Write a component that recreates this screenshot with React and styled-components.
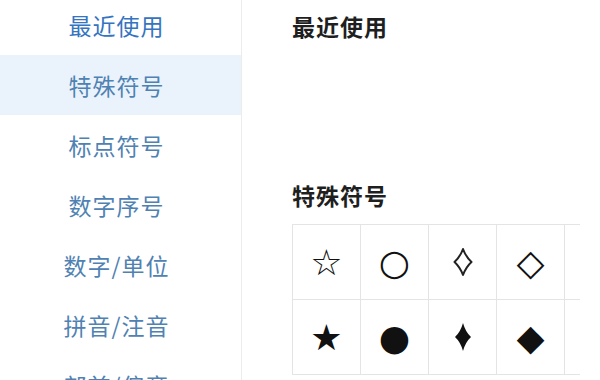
import styled, { createGlobalStyle } from 'styled-components';

const GlobalStyle = createGlobalStyle`
  html, body {
    margin: 0;
    padding: 0;
    background: #ffffff;
  }
  body {
    font-family: "Noto Sans CJK SC", "Noto Sans", sans-serif;
  }
`;

const categories = ['最近使用', '特殊符号', '标点符号', '数字序号', '数字/单位', '拼音/注音', '部首/偏旁'];

// suit diamonds drawn, the font ones are too straight
const SuitDiamond = ({ filled }) => (
  <svg width="24" height="30" viewBox="0 0 24 30">
    {filled ? (
      <path d="M12 1 Q14.5 10 20 15 Q14.5 20 12 29 Q9.5 20 4 15 Q9.5 10 12 1 Z" fill="#111" />
    ) : (
      <path
        d="M12 2 Q15 10 20.5 15 Q15 20 12 28 Q9 20 3.5 15 Q9 10 12 2 Z"
        fill="none"
        stroke="#222"
        strokeWidth="2"
        strokeLinejoin="round"
      />
    )}
  </svg>
);

// last column is cut by the panel edge, left empty like the screenshot
const symbols = [
  ['☆', '○', 'suit', '◇', ''],
  ['★', '●', 'suit-filled', '◆', ''],
];

const App = () => {
  return (
    <>
      <GlobalStyle />
      <Page>
        <Sidebar>
          {categories.map((name, i) => (
            <NavItem key={name} $active={i === 1} $first={i === 0}>
              {name}
            </NavItem>
          ))}
        </Sidebar>
        <Main>
          <Heading>最近使用</Heading>
          <RecentArea />
          <Heading>特殊符号</Heading>
          <GridWrap>
            <SymbolGrid>
              {symbols.map((row, r) =>
                row.map((sym, c) => (
                  <Cell key={`${r}-${c}`}>
                    {sym === 'suit' && <SuitDiamond />}
                    {sym === 'suit-filled' && <SuitDiamond filled />}
                    {!sym.startsWith('suit') && sym}
                  </Cell>
                ))
              )}
            </SymbolGrid>
          </GridWrap>
        </Main>
      </Page>
    </>
  );
};

const Page = styled.div`
  display: flex;
  flex-direction: row;
  width: 600px;
  height: 380px;
  overflow: hidden;
  background: #ffffff;
`;

const Sidebar = styled.div`
  display: flex;
  flex-direction: column;
  width: 241px;
  flex-shrink: 0;
  margin-top: -5px;
  border-right: 1px solid #ececec;
`;

const NavItem = styled.div`
  display: flex;
  align-items: center;
  justify-content: center;
  height: 60px;
  flex-shrink: 0;
  padding-right: 8px;
  font-size: 23px;
  letter-spacing: 1px;
  color: ${(p) => (p.$first ? '#3474c0' : '#4f82b2')};
  background-color: ${(p) => (p.$active ? '#eaf3fc' : 'transparent')};
`;

const Main = styled.div`
  display: flex;
  flex-direction: column;
  flex: 1;
  padding-left: 50px;
  padding-right: 20px;
  overflow: hidden;
`;

const Heading = styled.div`
  font-size: 23px;
  font-weight: 700;
  letter-spacing: 1px;
  color: #1f1f1f;
  line-height: 40px;
  margin-top: 6px;
`;

const RecentArea = styled.div`
  height: 123px;
`;

const GridWrap = styled.div`
  margin-top: 9px;
  width: 288px;
  overflow: hidden;
`;

const SymbolGrid = styled.div`
  display: grid;
  grid-template-columns: repeat(5, 68px);
  grid-auto-rows: 75px;
  width: max-content;
  border-top: 1px solid #e4e4e4;
  border-left: 1px solid #e4e4e4;
`;

const Cell = styled.div`
  display: flex;
  align-items: center;
  justify-content: center;
  border-right: 1px solid #e4e4e4;
  border-bottom: 1px solid #e4e4e4;
  font-family: "DejaVu Sans", sans-serif;
  font-size: 36px;
  color: #111111;
`;

export default App;
